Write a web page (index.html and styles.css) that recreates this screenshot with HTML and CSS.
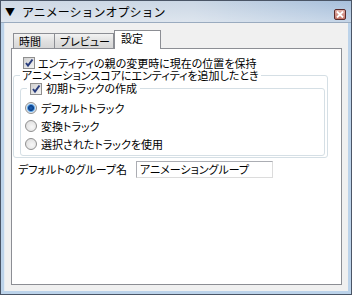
FILE: index.html
```html
<!DOCTYPE html>
<html lang="ja">
  <head>
    <meta charset="UTF-8" />
    <title>アニメーションオプション</title>
    <link rel="stylesheet" href="styles.css">
  </head>
  <body>
    <div class="window">
      <div class="titlebar">
        <span class="arrow">▼</span>
        <span class="title">アニメーションオプション</span>
        <span class="close">
          <svg width="8" height="7" viewBox="0 0 8 7">
            <path d="M1 0.5 L7 6.5 M7 0.5 L1 6.5" stroke="#fff" stroke-width="1.8" />
          </svg>
        </span>
      </div>

      <div class="client">
        <div class="tabs">
          <div class="tab tab-time">時間</div>
          <div class="tab tab-preview">プレビュー</div>
          <div class="tab tab-settings active">設定</div>
        </div>

        <div class="panel">
          <label class="row keep">
            <span class="check checked"></span>
            <span class="text">エンティティの親の変更時に現在の位置を保持</span>
          </label>

          <fieldset class="group outer">
            <legend>アニメーションスコアにエンティティを追加したとき</legend>

            <fieldset class="group inner">
              <legend>
                <span class="check checked"></span>
                <span class="text">初期トラックの作成</span>
              </legend>

              <label class="row radio-row">
                <span class="radio selected"></span>
                <span class="text">デフォルトトラック</span>
              </label>
              <label class="row radio-row">
                <span class="radio"></span>
                <span class="text">変換トラック</span>
              </label>
              <label class="row radio-row">
                <span class="radio"></span>
                <span class="text">選択されたトラックを使用</span>
              </label>
            </fieldset>
          </fieldset>

          <div class="row group-name">
            <span class="text">デフォルトのグループ名</span>
            <span class="field">アニメーショングループ</span>
          </div>
        </div>
      </div>
    </div>
  </body>
</html>
```

FILE: styles.css
```css
html,
body {
  margin: 0;
  padding: 0;
  background: #ffffff;
}
body {
  font-family: "Noto Sans CJK JP", "Noto Sans", sans-serif;
  font-size: 11px;
  line-height: 13px;
  color: #000;
}
.window {
  width: 352px;
  height: 295px;
  box-sizing: border-box;
  border: 1px solid #4a5566;
  background: #bcd3ea;
  display: flex;
  flex-direction: column;
}
.titlebar {
  height: 21px;
  display: flex;
  align-items: center;
  padding: 0 5px 0 4px;
  background: linear-gradient(to bottom, rgba(255, 255, 255, 0) 0%, rgba(255, 255, 255, 0.35) 100%),
    linear-gradient(to right, #cfd9e5 0%, #cbd7e5 55%, #a6bfdb 100%);
  border-bottom: 1px solid #9aabbf;
}
.arrow {
  font-size: 10px;
  width: 17px;
}
.title {
  font-size: 12px;
  line-height: 14px;
}
.close {
  margin-left: auto;
  margin-top: 6px;
  width: 10px;
  height: 9px;
  border: 1px solid #5b2b2b;
  border-radius: 2px;
  background: linear-gradient(to bottom, #e3b1a8, #c4766a);
  display: flex;
  align-items: center;
  justify-content: center;
}
.client {
  flex: 1;
  margin: 0 3px 3px 3px;
  background: #f0f0f0;
  padding: 7px 6px 6px 7px;
  display: flex;
  flex-direction: column;
  box-shadow: inset 1px 0 0 #e4ebf2;
}
.tabs {
  display: flex;
  align-items: flex-end;
  padding-left: 2px;
}
.tab {
  box-sizing: border-box;
  height: 15px;
  border: 1px solid #8c8e94;
  border-bottom: none;
  background: linear-gradient(to bottom, #f3f3f3, #e1e1e1 50%, #d6d6d6);
  font-size: 11px;
  line-height: 14px;
  padding-left: 5px;
  white-space: nowrap;
  overflow: hidden;
}
.tab-time {
  width: 42px;
}
.tab-preview {
  width: 60px;
  margin-left: -1px;
  padding-left: 5px;
  font-feature-settings: "palt";
}
.tab-settings {
  width: 47px;
}
.tab.active {
  height: 19px;
  background: #ffffff;
  margin-left: 0;
  margin-bottom: -1px;
  padding-left: 6px;
  line-height: 15px;
  position: relative;
  z-index: 1;
}
.panel {
  flex: 1;
  background: #ffffff;
  border: 1px solid #8c8e94;
  padding: 8px 13px 0 1px;
  font-feature-settings: "palt";
}
.row {
  display: flex;
  align-items: center;
  line-height: 13px;
}
.keep {
  margin-left: 10px;
  height: 12px;
}
.keep .text {
  margin-left: 3px;
}
.check {
  display: inline-block;
  box-sizing: border-box;
  width: 12px;
  height: 12px;
  border: 1px solid #8f8f8f;
  background: linear-gradient(135deg, #d6d6d6, #f6f6f6);
  flex: none;
}
.check.checked {
  background: url("data:image/svg+xml;utf8,<svg xmlns='http://www.w3.org/2000/svg' width='10' height='10'><path d='M2 5 L4 7.5 L8.5 1.5' fill='none' stroke='%23283c7c' stroke-width='2'/></svg>") center no-repeat,
    linear-gradient(135deg, #d0d0d0, #f4f4f4);
}
.group {
  margin: 0;
  padding: 0;
  border: 1px solid #d5dfe5;
  border-radius: 3px;
  min-width: 0;
}
.group legend {
  padding: 0 2px;
  height: 13px;
  line-height: 13px;
}
.outer {
  padding: 0 2px 1px 6px;
}
.inner {
  padding: 4px 0 2px 4px;
}
.inner > legend {
  display: flex;
  align-items: center;
  margin-left: 2px;
  padding: 0 3px;
}
.inner > legend .text {
  margin-left: 4px;
}
.radio-row {
  height: 18px;
}
.radio-row .text {
  margin-left: 4px;
}
.radio {
  box-sizing: border-box;
  width: 12px;
  height: 12px;
  border-radius: 50%;
  border: 1px solid #8f8f8f;
  background: radial-gradient(circle at 60% 60%, #f8f8f8, #d8d8d8);
  flex: none;
}
.radio.selected {
  background: radial-gradient(circle, #1d64b8 0, #0b3f8a 2.5px, #5fa6e6 3.5px, #dfe8f1 4.5px, #f4f4f4 6px);
}
.group-name {
  margin: 3px 0 0 5px;
}
.field {
  margin-left: 9px;
  box-sizing: border-box;
  width: 137px;
  height: 17px;
  border: 1px solid #abadb3;
  border-right-color: #dcdcdc;
  border-bottom-color: #dcdcdc;
  padding-left: 3px;
  line-height: 15px;
  background: #ffffff;
}
```
